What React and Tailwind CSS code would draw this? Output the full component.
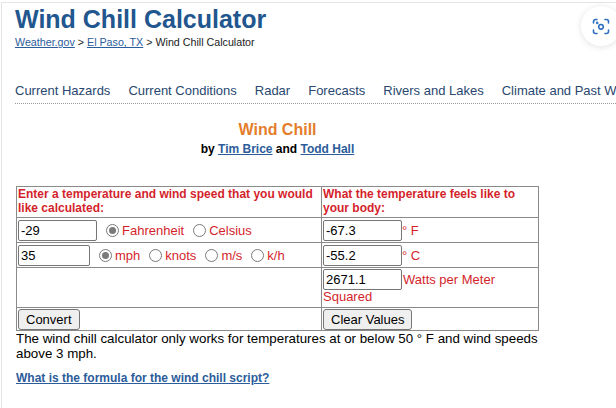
import React from "react";

function Radio({ checked, className }) {
  return (
    <span
      className={
        "inline-flex items-center justify-center w-[13px] h-[13px] rounded-full border border-[#7a7a7a] bg-white shrink-0 " +
        (className || "")
      }
    >
      {checked ? <span className="w-[7px] h-[7px] rounded-full bg-[#7a7a7a]" /> : null}
    </span>
  );
}

function Field({ value, className }) {
  return (
    <input
      readOnly
      value={value}
      className={
        "h-[21px] border border-[#767676] rounded-[2px] px-[2px] text-[13px] leading-[15px] text-black bg-white outline-none shrink-0 font-['Liberation_Sans',Arial,sans-serif] " +
        (className || "")
      }
    />
  );
}

function Btn({ children }) {
  return (
    <button className="h-[21px] px-[7px] bg-[#efefef] border border-[#767676] rounded-[3px] text-[13px] leading-[15px] text-black font-['Liberation_Sans',Arial,sans-serif]">
      {children}
    </button>
  );
}

function LensIcon() {
  return (
    <svg width="18" height="17" viewBox="0 0 18 17" fill="none" stroke="#2f6fc0" strokeWidth="1.6" strokeLinecap="round">
      <path d="M1.5 5V3.5a2 2 0 0 1 2-2H5" />
      <path d="M13 1.5h1.5a2 2 0 0 1 2 2V5" />
      <path d="M16.5 12v1.5a2 2 0 0 1-2 2H13" />
      <path d="M5 15.5H3.5a2 2 0 0 1-2-2V12" />
      <circle cx="9" cy="8.8" r="2.3" />
      <circle cx="5.2" cy="4.9" r="0.5" fill="#2f6fc0" />
    </svg>
  );
}

export default function App() {
  const red = "text-[#d41f2c]";
  return (
    <div className="relative w-[616px] h-[408px] overflow-hidden bg-white text-black font-['Liberation_Sans',Arial,sans-serif]">
      <div className="mt-[2px] ml-[1px] h-[406px] border-t border-l border-[#e4e4e4] pl-[13px] pt-[2px]">
        <h1 className="text-[25px] leading-[28px] font-bold text-[#22568f] whitespace-nowrap">
          Wind Chill Calculator
        </h1>
        <div className="mt-[3px] text-[10.7px] leading-[13px] text-[#222] whitespace-nowrap">
          <a className="text-[#2c5c9a] underline">Weather.gov</a>
          <span> &gt; </span>
          <a className="text-[#2c5c9a] underline">El Paso, TX</a>
          <span> &gt; Wind Chill Calculator</span>
        </div>

        <nav className="mt-[34px] pb-[5px] border-b border-dotted border-[#9a9a9a] flex gap-[18px] whitespace-nowrap text-[13px] leading-[15px] text-[#29486f]">
          <span>Current Hazards</span>
          <span>Current Conditions</span>
          <span>Radar</span>
          <span>Forecasts</span>
          <span>Rivers and Lakes</span>
          <span>Climate and Past Weather</span>
        </nav>

        <div className="ml-[1px] w-[523px]">
          <div className="mt-[17px] text-center">
            <div className="text-[16px] leading-[18px] font-bold text-[#e47d2c]">Wind Chill</div>
            <div className="mt-[3px] text-[12px] leading-[14px] font-bold text-black">
              by <a className="text-[#2c5c9a] underline">Tim Brice</a> and{" "}
              <a className="text-[#2c5c9a] underline">Todd Hall</a>
            </div>
          </div>

          <div className="mt-[30px] grid grid-cols-[305px_217px] border-l border-t border-[#8a8a8a]">
            <div className={"h-[31px] px-[1px] border-r border-b border-[#8a8a8a] text-[12px] leading-[14px] font-bold " + red}>
              Enter a temperature and wind speed that you would like calculated:
            </div>
            <div className={"h-[31px] px-[1px] border-r border-b border-[#8a8a8a] text-[12px] leading-[14px] font-bold " + red}>
              What the temperature feels like to your body:
            </div>

            <div className={"h-[25px] px-[1px] border-r border-b border-[#8a8a8a] flex items-center text-[13px] leading-[15px] " + red}>
              <Field value="-29" className="w-[79px]" />
              <Radio checked className="ml-[9px]" />
              <span className="ml-[3px]">Fahrenheit</span>
              <Radio className="ml-[9px]" />
              <span className="ml-[3px]">Celsius</span>
            </div>
            <div className={"h-[25px] px-[1px] border-r border-b border-[#8a8a8a] flex items-center text-[13px] leading-[15px] " + red}>
              <Field value="-67.3" className="w-[79px]" />
              <span>° F</span>
            </div>

            <div className={"h-[25px] px-[1px] border-r border-b border-[#8a8a8a] flex items-center text-[13px] leading-[15px] " + red}>
              <Field value="35" className="w-[72px]" />
              <Radio checked className="ml-[9px]" />
              <span className="ml-[3px]">mph</span>
              <Radio className="ml-[9px]" />
              <span className="ml-[3px]">knots</span>
              <Radio className="ml-[9px]" />
              <span className="ml-[3px]">m/s</span>
              <Radio className="ml-[9px]" />
              <span className="ml-[3px]">k/h</span>
            </div>
            <div className={"h-[25px] px-[1px] border-r border-b border-[#8a8a8a] flex items-center text-[13px] leading-[15px] " + red}>
              <Field value="-55.2" className="w-[79px]" />
              <span>° C</span>
            </div>

            <div className="h-[40px] border-r border-b border-[#8a8a8a]" />
            <div className={"h-[40px] px-[1px] pt-[1px] border-r border-b border-[#8a8a8a] flex flex-col text-[13px] leading-[15px] " + red}>
              <div className="flex items-center">
                <Field value="2671.1" className="w-[79px]" />
                <span className="ml-[1px]">Watts per Meter</span>
              </div>
              <div className="-mt-[1px]">Squared</div>
            </div>

            <div className="h-[23px] px-[1px] border-r border-b border-[#8a8a8a] flex items-center">
              <Btn>Convert</Btn>
            </div>
            <div className="h-[23px] px-[1px] border-r border-b border-[#8a8a8a] flex items-center">
              <Btn>Clear Values</Btn>
            </div>
          </div>

          <p className="w-[525px] text-[13.33px] leading-[15px] text-black">
            The wind chill calculator only works for temperatures at or below 50 ° F and wind speeds above 3 mph.
          </p>
          <a className="block mt-[10px] text-[12px] leading-[14px] font-bold text-[#2c5c9a] underline whitespace-nowrap">
            What is the formula for the wind chill script?
          </a>
        </div>
      </div>

      <div className="absolute left-[581px] top-[6px] w-[40px] h-[40px] rounded-full bg-white shadow-[0_1px_6px_rgba(0,0,0,0.12)] flex items-center justify-center">
        <LensIcon />
      </div>
    </div>
  );
}
